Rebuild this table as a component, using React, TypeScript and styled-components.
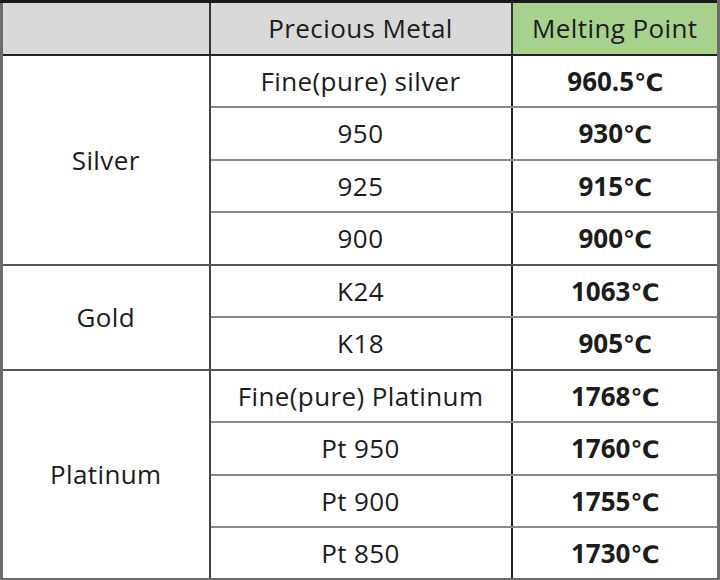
import styled, { createGlobalStyle } from 'styled-components';

const GlobalStyle = createGlobalStyle`
  html, body {
    margin: 0;
    padding: 0;
    background: #ffffff;
  }
`;

const Table = styled.table`
  width: 720px;
  height: 580px;
  border-collapse: collapse;
  table-layout: fixed;
  font-family: 'Open Sans', Lato, sans-serif;
  font-size: 26px;
  letter-spacing: 0.4px;
  color: #1c1c1c;
  border-top: 3px solid #1a1a1a;
  border-left: 3px solid #6b6b6b;
  border-right: 3px solid #6b6b6b;
  border-bottom: 3px solid #6b6b6b;
`;

const HeadRow = styled.tr`
  height: 53px;
`;

const Row = styled.tr`
  height: 52.5px;
`;

const HeadCell = styled.th<{ $green?: boolean }>`
  background: ${(p) => (p.$green ? '#a9d18e' : '#d9d9d9')};
  font-weight: normal;
  text-align: center;
  padding: 0;
  border-bottom: 2px solid #222;
  border-right: 2px solid #333;
`;

const GroupCell = styled.td`
  text-align: center;
  padding: 0;
  border-right: 2px solid #444;
  border-bottom: 2px solid #555;
`;

const MetalCell = styled.td<{ $last?: boolean }>`
  text-align: center;
  padding: 0;
  border-right: 2px solid #222;
  border-bottom: 2px solid ${(p) => (p.$last ? '#555' : '#8a8a8a')};
`;

const PointCell = styled.td<{ $last?: boolean }>`
  text-align: center;
  padding: 0;
  font-weight: bold;
  letter-spacing: 0;
  border-bottom: 2px solid ${(p) => (p.$last ? '#555' : '#8a8a8a')};
`;

const Degree = styled.span`
  font-family: 'DejaVu Sans', sans-serif;
  font-weight: bold;
  font-size: 24px;
  letter-spacing: -1px;
`;

const groups = [
  {
    name: 'Silver',
    items: [
      ['Fine(pure) silver', '960.5'],
      ['950', '930'],
      ['925', '915'],
      ['900', '900'],
    ],
  },
  {
    name: 'Gold',
    items: [
      ['K24', '1063'],
      ['K18', '905'],
    ],
  },
  {
    name: 'Platinum',
    items: [
      ['Fine(pure) Platinum', '1768'],
      ['Pt 950', '1760'],
      ['Pt 900', '1755'],
      ['Pt 850', '1730'],
    ],
  },
];

export default function App() {
  return (
    <>
      <GlobalStyle />
      <Table>
        <colgroup>
          <col style={{ width: 208 }} />
          <col style={{ width: 302 }} />
          <col />
        </colgroup>
        <thead>
          <HeadRow>
            <HeadCell />
            <HeadCell>Precious Metal</HeadCell>
            <HeadCell $green>Melting Point</HeadCell>
          </HeadRow>
        </thead>
        <tbody>
          {groups.map((g) =>
            g.items.map(([metal, point], i) => {
              const last = i === g.items.length - 1;
              return (
                <Row key={metal}>
                  {i === 0 && <GroupCell rowSpan={g.items.length}>{g.name}</GroupCell>}
                  <MetalCell $last={last}>{metal}</MetalCell>
                  <PointCell $last={last}>
                    {point}
                    <Degree>℃</Degree>
                  </PointCell>
                </Row>
              );
            })
          )}
        </tbody>
      </Table>
    </>
  );
}
